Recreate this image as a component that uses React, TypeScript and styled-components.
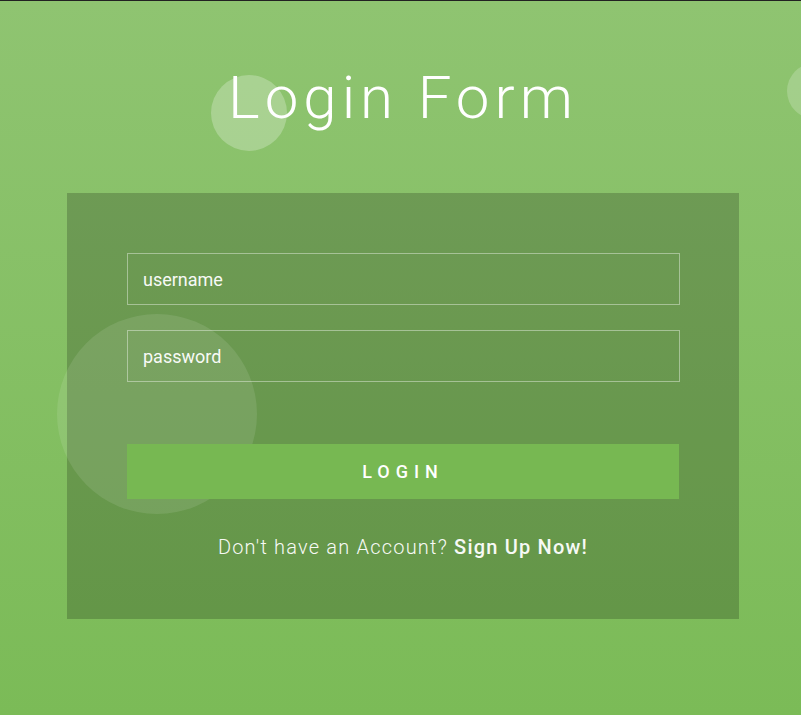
import React from "react";
import styled, { createGlobalStyle } from "styled-components";

const Global = createGlobalStyle`
  html, body { margin: 0; padding: 0; }
  body { font-family: Roboto, "Liberation Sans", sans-serif; background: #222; }
  * { box-sizing: border-box; }
`;

const Page = styled.div`
  position: relative;
  overflow: hidden;
  height: 715px;
  border-top: 1px solid #222;
  background: linear-gradient(to bottom, #8fc471 0%, #7bbb57 100%);
`;

const Title = styled.h1`
  margin: 0;
  padding-top: 62px;
  height: 192px;
  text-align: center;
  font-family: Roboto, "Liberation Sans", sans-serif;
  font-weight: 300;
  font-size: 60px;
  line-height: 70px;
  letter-spacing: 5px;
  text-indent: 5px;
  color: #fff;
  position: relative;
  z-index: 2;
`;

const Panel = styled.form`
  width: 672px;
  margin-left: 67px;
  padding: 60px;
  background: rgba(0, 0, 0, 0.2);
  display: flex;
  flex-direction: column;
`;

const Field = styled.input`
  position: relative;
  z-index: 2;
  display: block;
  width: 553px;
  height: 52px;
  margin: 0 0 25px 0;
  padding: 0 15px;
  border: 1px solid rgba(255, 255, 255, 0.4);
  background: transparent;
  color: #fff;
  font-family: Roboto, "Liberation Sans", sans-serif;
  font-size: 18px;
  outline: none;
  &::placeholder { color: #fff; opacity: 0.95; }
`;

const Button = styled.button`
  position: relative;
  z-index: 2;
  margin-top: 37px;
  width: 552px;
  height: 55px;
  border: 0;
  background: #77b852;
  color: #fff;
  font-family: Roboto, "Liberation Sans", sans-serif;
  font-weight: 500;
  font-size: 18px;
  letter-spacing: 6px;
  cursor: pointer;
`;

const Footer = styled.p`
  position: relative;
  z-index: 2;
  margin: 36px 0 0 0;
  text-align: center;
  color: #fff;
  font-family: Roboto, "Liberation Sans", sans-serif;
  font-weight: 300;
  font-size: 20px;
  line-height: 24px;
  letter-spacing: 1.2px;
  opacity: 0.95;
  b { font-weight: 500; }
`;

const Bubble = styled.span<{ $x: number; $y: number; $r: number; $a: number }>`
  position: absolute;
  z-index: 1;
  left: ${(p) => p.$x - p.$r}px;
  top: ${(p) => p.$y - p.$r}px;
  width: ${(p) => p.$r * 2}px;
  height: ${(p) => p.$r * 2}px;
  border-radius: 50%;
  background: rgba(255, 255, 255, ${(p) => p.$a});
  pointer-events: none;
`;

export default function App() {
  return (
    <>
      <Global />
      <Page>
        <Title>Login Form</Title>
        <Panel onSubmit={(e) => e.preventDefault()}>
          <Field type="text" placeholder="username" />
          <Field type="password" placeholder="password" />
          <Button type="submit">LOGIN</Button>
          <Footer>
            Don't have an Account? <b>Sign Up Now!</b>
          </Footer>
        </Panel>
        <Bubble $x={249} $y={112} $r={38} $a={0.25} />
        <Bubble $x={157} $y={413} $r={100} $a={0.1} />
        <Bubble $x={815} $y={90} $r={28} $a={0.2} />
      </Page>
    </>
  );
}
